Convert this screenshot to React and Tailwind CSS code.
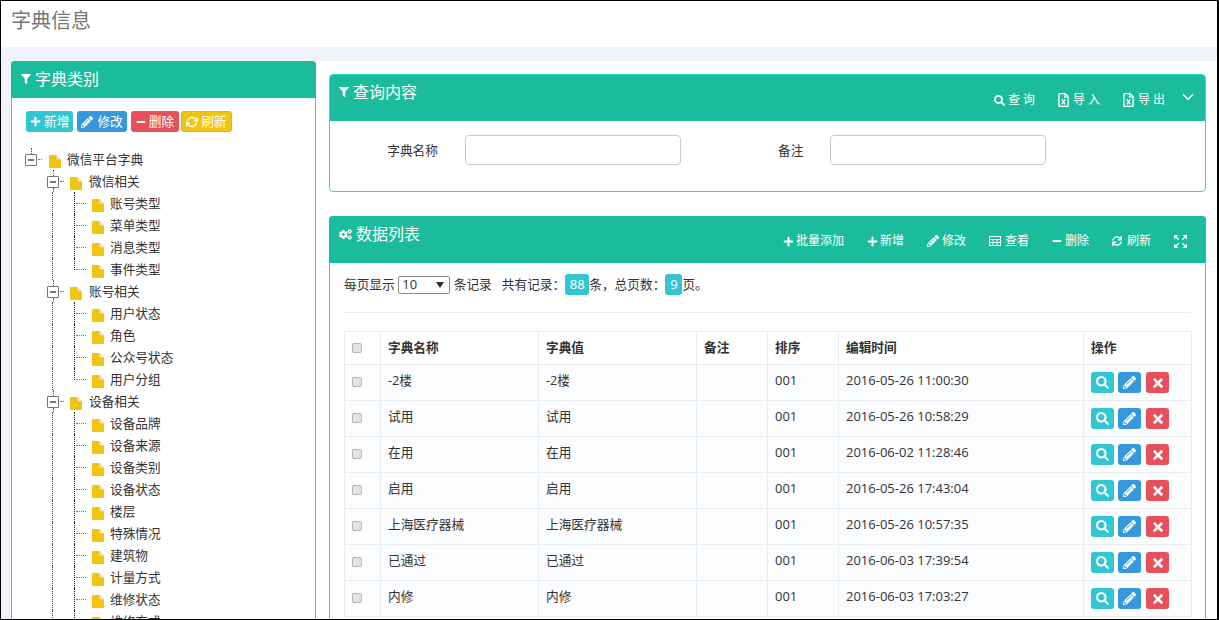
import { FaFilter, FaPlus, FaPencilAlt, FaMinus, FaSearch, FaRegFileExcel, FaCogs, FaSync } from "react-icons/fa";
import { FiRefreshCw, FiChevronDown } from "react-icons/fi";
import { ImCross } from "react-icons/im";

const tree = [
    { name: "微信相关", children: ["账号类型", "菜单类型", "消息类型", "事件类型"] },
    { name: "账号相关", children: ["用户状态", "角色", "公众号状态", "用户分组"] },
    { name: "设备相关", children: ["设备品牌", "设备来源", "设备类别", "设备状态", "楼层", "特殊情况", "建筑物", "计量方式", "维修状态", "维修方式"] },
];

const rows = [
    ["-2楼", "-2楼", "001", "2016-05-26 11:00:30"],
    ["试用", "试用", "001", "2016-05-26 10:58:29"],
    ["在用", "在用", "001", "2016-06-02 11:28:46"],
    ["启用", "启用", "001", "2016-05-26 17:43:04"],
    ["上海医疗器械", "上海医疗器械", "001", "2016-05-26 10:57:35"],
    ["已通过", "已通过", "001", "2016-06-03 17:39:54"],
    ["内修", "内修", "001", "2016-06-03 17:03:27"],
];

function FileIcon() {
    return (
        <svg width="12" height="13" viewBox="0 0 12 13" className="shrink-0 mt-[7px]">
            <path d="M0 1 a1 1 0 0 1 1-1 H7.5 L12 4.5 V12 a1 1 0 0 1-1 1 H1 a1 1 0 0 1-1-1z" fill="#f1c40f" />
            <path d="M7.5 0 L12 4.5 H7.5z" fill="#f8dcc0" />
        </svg>
    )
}

function GridIcon() {
    return (
        <svg width="12" height="10" viewBox="0 0 12 10" className="shrink-0" fill="none" stroke="white">
            <rect x="0.5" y="0.5" width="11" height="9" />
            <path d="M0.5 3.5 H11.5 M4 3.5 V9.5 M8 3.5 V9.5 M0.5 6.5 H11.5" />
        </svg>
    )
}

function ExpandIcon() {
    return (
        <svg width="13" height="13" viewBox="0 0 13 13" className="shrink-0" fill="white" stroke="white" strokeWidth="0">
            <path d="M0 0 H4.5 L0 4.5z M13 0 V4.5 L8.5 0z M0 13 V8.5 L4.5 13z M13 13 H8.5 L13 8.5z" />
            <path d="M2 2 L4.8 4.8 M11 2 L8.2 4.8 M2 11 L4.8 8.2 M11 11 L8.2 8.2" strokeWidth="1.2" />
        </svg>
    )
}

function Switch({ bottom }) {
    return (
        <span className={`flex h-full shrink-0 ${bottom ? "w-[21px]" : "w-[22px]"}`}>
            <span className="flex flex-col items-center w-[12px] h-full">
                <span className="h-[6px] w-0 border-l border-dotted border-[#555]" />
                <span className="flex items-center justify-center w-[12px] h-[12px] shrink-0 border border-[#777] rounded-[1px] bg-white">
                    <span className="w-[6px] h-[2px] bg-[#777]" />
                </span>
                {bottom && <span className="h-[4px] w-0 border-l border-dotted border-[#555]" />}
            </span>
            <span className="w-[4px] h-0 mt-[11px] ml-px border-t border-dotted border-[#777]" />
        </span>
    )
}

function Connector({ last }) {
    return (
        <span className="flex w-[21px] h-full shrink-0 pl-[5px]">
            <span className={`w-0 border-l border-dotted border-[#222] ${last ? "h-[12px]" : "h-full"}`} />
            <span className="w-[10px] h-0 mt-[11px] ml-px border-t border-dotted border-[#777]" />
        </span>
    )
}

function Rail() {
    return (
        <span className="flex justify-start w-[22px] h-full shrink-0 pl-[5px]">
            <span className="w-0 h-full border-l border-dotted border-[#555]" />
        </span>
    )
}

function TreeRow({ children, label, gap }) {
    return (
        <div className="flex h-[22px] text-[12.7px] leading-[22px] text-[#333] whitespace-nowrap">
            {children}
            <span className="ml-[2px] flex">
                <FileIcon />
            </span>
            <span className={gap ? "ml-[7px]" : "ml-[6px]"}>{label}</span>
        </div>
    )
}

function Tree() {
    return (
        <div className="mt-[16px] ml-[13px]">
            <TreeRow label="微信平台字典">
                <Switch />
            </TreeRow>
            {tree.map((group) => (
                <div key={group.name}>
                    <TreeRow label={group.name} gap>
                        <span className="w-[22px] shrink-0" />
                        <Switch bottom />
                    </TreeRow>
                    {group.children.map((name, i) => (
                        <TreeRow key={name} label={name}>
                            <span className="w-[22px] shrink-0" />
                            <Rail />
                            <Connector last={i === group.children.length - 1} />
                        </TreeRow>
                    ))}
                </div>
            ))}
        </div>
    )
}

function SmallButton({ icon, label, color }) {
    return (
        <button className={`flex items-center h-[21px] rounded-[3px] text-white text-[12.7px] leading-none ${color}`}>
            {icon}
            {label}
        </button>
    )
}

function ToolItem({ icon, label, gap = "gap-[3px]", wide }) {
    return (
        <span className={`flex items-center text-white text-[12px] leading-none ${gap} ${wide ? "tracking-[3px]" : ""}`}>
            {icon}
            {label}
        </span>
    )
}

function IconButton({ color, children }) {
    return (
        <span className={`flex items-center justify-center w-[23px] h-[21px] rounded-[3px] text-white ${color}`}>
            {children}
        </span>
    )
}

function Checkbox() {
    return <input type="checkbox" className="appearance-none block w-[10px] h-[10px] rounded-[2px] border border-[#b5b5b5] bg-[#e3e3e3]" />
}

export default function App() {
    return (
        <div className="w-[1219px] h-[620px] overflow-hidden border-t border-l border-b border-r-2 border-black bg-white font-['Open_Sans','Noto_Sans_CJK_SC',sans-serif]">
            <div className="h-[46px] pl-[10px] pt-[6px] text-[20px] leading-[28px] text-[#777]">字典信息</div>
            <div className="h-[14px] bg-[#eff3f8]" />
            <div className="flex h-[560px]">
                <div className="w-[315px] shrink-0 bg-[#eff3f8] pl-[10px]">
                    <div className="h-full w-[305px] bg-white border-x border-[#3fd0b2] rounded-t-[4px]">
                        <div className="-mx-px h-[37px] flex items-center gap-[4px] pl-[10px] pb-[2px] bg-[#1bbc9b] rounded-t-[4px] text-white text-[16px]">
                            <FaFilter className="w-[10px] h-[10px]" />
                            字典类别
                        </div>
                        <div className="flex gap-[4px] mt-[13px] ml-[14px]">
                            <SmallButton icon={<FaPlus className="w-[11px] h-[11px]" />} label="新增" color="bg-[#32c5d2] px-[4px] gap-[3px]" />
                            <SmallButton icon={<FaPencilAlt className="w-[12px] h-[12px]" />} label="修改" color="bg-[#3598dc] px-[4px] gap-[4px]" />
                            <SmallButton icon={<FaMinus className="w-[10px] h-[10px]" />} label="删除" color="bg-[#e7505a] px-[5px] gap-[3px]" />
                            <SmallButton icon={<FiRefreshCw strokeWidth={3} className="w-[12px] h-[12px]" />} label="刷新" color="bg-[#f1c40f] border border-[#e0b50c] -ml-[2px] px-[4px] gap-[3px]" />
                        </div>
                        <Tree />
                    </div>
                </div>
                <div className="flex-1 pl-[13px] pr-[11px] pt-[13px] min-w-0">
                    <div className="h-[118px] border border-[#25e0bc] rounded-[4px] overflow-hidden">
                        <div className="-mx-px -mt-px h-[47px] flex justify-between bg-[#1bbc9b] pl-[10px] pr-[9px]">
                            <div className="flex items-center gap-[4px] h-[36px] text-white text-[16px]">
                                <FaFilter className="w-[10px] h-[10px]" />
                                查询内容
                            </div>
                            <div className="flex items-start pt-[19px]">
                                <div className="flex gap-[20px]">
                                    <ToolItem wide icon={<FaSearch className="w-[11px] h-[11px]" />} label="查询" />
                                    <ToolItem wide gap="gap-[4px]" icon={<FaRegFileExcel className="w-[11px] h-[14px]" />} label="导入" />
                                    <ToolItem wide gap="gap-[4px]" icon={<FaRegFileExcel className="w-[11px] h-[14px]" />} label="导出" />
                                </div>
                                <FiChevronDown className="w-[18px] h-[18px] text-white ml-[11px] -mt-[5px]" />
                            </div>
                        </div>
                        <div className="flex items-center pt-[14px] text-[12.7px] text-[#333]">
                            <span className="w-[108px] text-right leading-[30px]">字典名称</span>
                            <input className="ml-[27px] w-[216px] h-[30px] border border-[#c2cad8] rounded-[4px] bg-white" />
                            <span className="ml-[97px] leading-[30px]">备注</span>
                            <input className="ml-[27px] w-[216px] h-[30px] border border-[#c2cad8] rounded-[4px] bg-white" />
                        </div>
                    </div>
                    <div className="mt-[24px] h-[420px] border-x border-[#3fd0b2] rounded-t-[4px]">
                        <div className="-mx-px h-[47px] flex justify-between bg-[#1bbc9b] rounded-t-[4px] pl-[10px] pr-[19px]">
                            <div className="flex items-center gap-[4px] h-[36px] text-white text-[16px]">
                                <FaCogs className="w-[13px] h-[13px]" />
                                数据列表
                            </div>
                            <div className="flex items-center gap-[23px] pt-[3px]">
                                <ToolItem gap="gap-[2px]" icon={<FaPlus className="w-[11px] h-[11px]" />} label="批量添加" />
                                <ToolItem gap="gap-[2px]" icon={<FaPlus className="w-[11px] h-[11px]" />} label="新增" />
                                <ToolItem icon={<FaPencilAlt className="w-[12px] h-[12px]" />} label="修改" />
                                <ToolItem gap="gap-[4px]" icon={<GridIcon />} label="查看" />
                                <ToolItem icon={<FaMinus className="w-[10px] h-[10px]" />} label="删除" />
                                <ToolItem gap="gap-[5px]" icon={<FaSync className="w-[10px] h-[10px]" />} label="刷新" />
                                <ExpandIcon />
                            </div>
                        </div>
                        <div className="mx-[14px]">
                            <div className="flex items-center h-[50px] pb-[6px] border-b border-[#e7ecf1] text-[12.7px] text-[#333] whitespace-nowrap">
                                <span>每页显示</span>
                                <span className="relative mx-[3.5px] flex">
                                    <select className="appearance-none w-[52px] h-[18px] pl-[3px] border border-[#8a8a8a] rounded-[2px] text-[13px] leading-none text-[#333]" defaultValue="10">
                                        <option>10</option>
                                    </select>
                                    <span className="absolute right-[6px] top-[6px] w-0 h-0 border-x-[4px] border-t-[6px] border-x-transparent border-t-[#333]" />
                                </span>
                                <span>条记录</span>
                                <span className="ml-[10px]">共有记录：</span>
                                <span className="flex items-center justify-center w-[24px] h-[21px] rounded-[3px] bg-[#32c5d2] text-white text-[13px]">88</span>
                                <span>条，总页数：</span>
                                <span className="flex items-center justify-center w-[17px] h-[21px] rounded-[3px] bg-[#32c5d2] text-white text-[13px]">9</span>
                                <span>页。</span>
                            </div>
                            <table className="mt-[18px] w-[847px] table-fixed border-collapse text-[12.7px] text-[#333]">
                                <colgroup>
                                    <col className="w-[36px]" />
                                    <col className="w-[158px]" />
                                    <col className="w-[158px]" />
                                    <col className="w-[71px]" />
                                    <col className="w-[71px]" />
                                    <col className="w-[245px]" />
                                    <col className="w-[108px]" />
                                </colgroup>
                                <thead>
                                    <tr className="h-[33px] font-bold">
                                        <th className="border border-[#e7ecf1] pl-[7px]"><Checkbox /></th>
                                        <th className="border border-[#e7ecf1] pl-[7px] text-left">字典名称</th>
                                        <th className="border border-[#e7ecf1] pl-[7px] text-left">字典值</th>
                                        <th className="border border-[#e7ecf1] pl-[7px] text-left">备注</th>
                                        <th className="border border-[#e7ecf1] pl-[7px] text-left">排序</th>
                                        <th className="border border-[#e7ecf1] pl-[7px] text-left">编辑时间</th>
                                        <th className="border border-[#e7ecf1] pl-[7px] text-left">操作</th>
                                    </tr>
                                </thead>
                                <tbody>
                                    {rows.map((row, i) => (
                                        <tr key={i} className="h-[36px] bg-[#fbfcfd]">
                                            <td className="border border-[#e7ecf1] pl-[7px] pb-[2px]"><Checkbox /></td>
                                            <td className="border border-[#e7ecf1] pl-[7px] pb-[3px]">{row[0]}</td>
                                            <td className="border border-[#e7ecf1] pl-[7px] pb-[3px]">{row[1]}</td>
                                            <td className="border border-[#e7ecf1] pl-[7px]"></td>
                                            <td className="border border-[#e7ecf1] pl-[7px] pb-[4px] text-[13px]">{row[2]}</td>
                                            <td className="border border-[#e7ecf1] pl-[7px] pb-[4px] text-[13px]">{row[3]}</td>
                                            <td className="border border-[#e7ecf1] pl-[7px]">
                                                <div className="flex">
                                                    <IconButton color="bg-[#32c5d2]"><FaSearch className="w-[13px] h-[13px]" /></IconButton>
                                                    <span className="ml-[4px]"><IconButton color="bg-[#3598dc]"><FaPencilAlt className="w-[13px] h-[13px]" /></IconButton></span>
                                                    <span className="ml-[5px]"><IconButton color="bg-[#e7505a]"><ImCross className="w-[10px] h-[10px]" /></IconButton></span>
                                                </div>
                                            </td>
                                        </tr>
                                    ))}
                                </tbody>
                            </table>
                        </div>
                    </div>
                </div>
            </div>
        </div>
    )
}
